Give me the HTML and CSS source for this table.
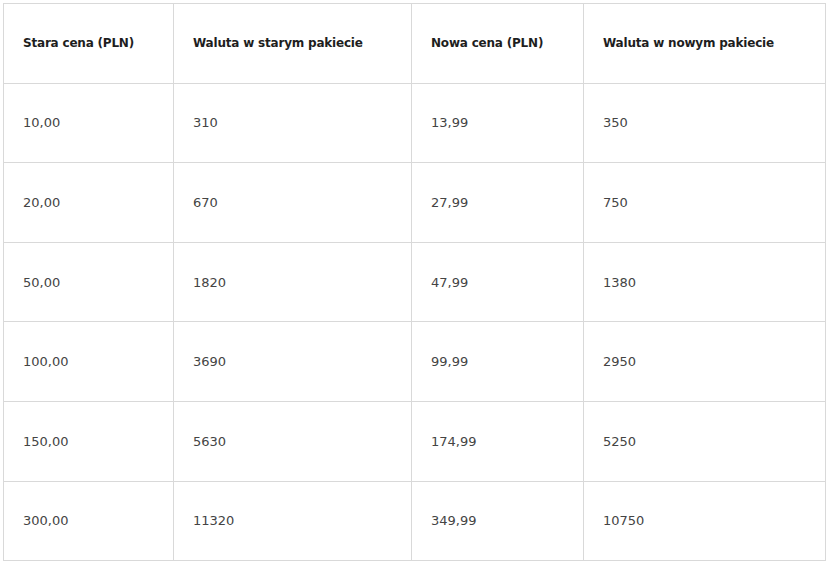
FILE: index.html
```html
<!DOCTYPE html>
<html lang="pl">
<head>
<meta charset="utf-8">
<link rel="stylesheet" href="styles.css">
</head>
<body>
<table class="price-table">
  <colgroup>
    <col class="c1"><col class="c2"><col class="c3"><col class="c4">
  </colgroup>
  <thead>
    <tr><th>Stara cena (PLN)</th><th>Waluta w starym pakiecie</th><th>Nowa cena (PLN)</th><th>Waluta w nowym pakiecie</th></tr>
  </thead>
  <tbody>
    <tr><td>10,00</td><td>310</td><td>13,99</td><td>350</td></tr>
    <tr><td>20,00</td><td>670</td><td>27,99</td><td>750</td></tr>
    <tr><td>50,00</td><td>1820</td><td>47,99</td><td>1380</td></tr>
    <tr><td>100,00</td><td>3690</td><td>99,99</td><td>2950</td></tr>
    <tr><td>150,00</td><td>5630</td><td>174,99</td><td>5250</td></tr>
    <tr><td>300,00</td><td>11320</td><td>349,99</td><td>10750</td></tr>
  </tbody>
</table>
</body>
</html>
```
FILE: styles.css
```css
html, body {
  margin: 0;
  background: #fff;
}
body {
  padding: 3px;
  font-family: "DejaVu Sans", Verdana, sans-serif;
}
.price-table {
  border-collapse: collapse;
  table-layout: fixed;
  width: 822px;
}
.c1 { width: 170px; }
.c2 { width: 238px; }
.c3 { width: 172px; }
.c4 { width: 242px; }
.price-table th,
.price-table td {
  border: 1px solid #d9d9d9;
  height: 79.6px;
  padding: 0 0 0 19px;
  text-align: left;
  vertical-align: middle;
  box-sizing: border-box;
}
.price-table th {
  font-size: 12px;
  letter-spacing: -0.2px;
  font-weight: bold;
  color: #1e1e1e;
}
.price-table td {
  font-size: 13px;
  color: #444;
}
```
